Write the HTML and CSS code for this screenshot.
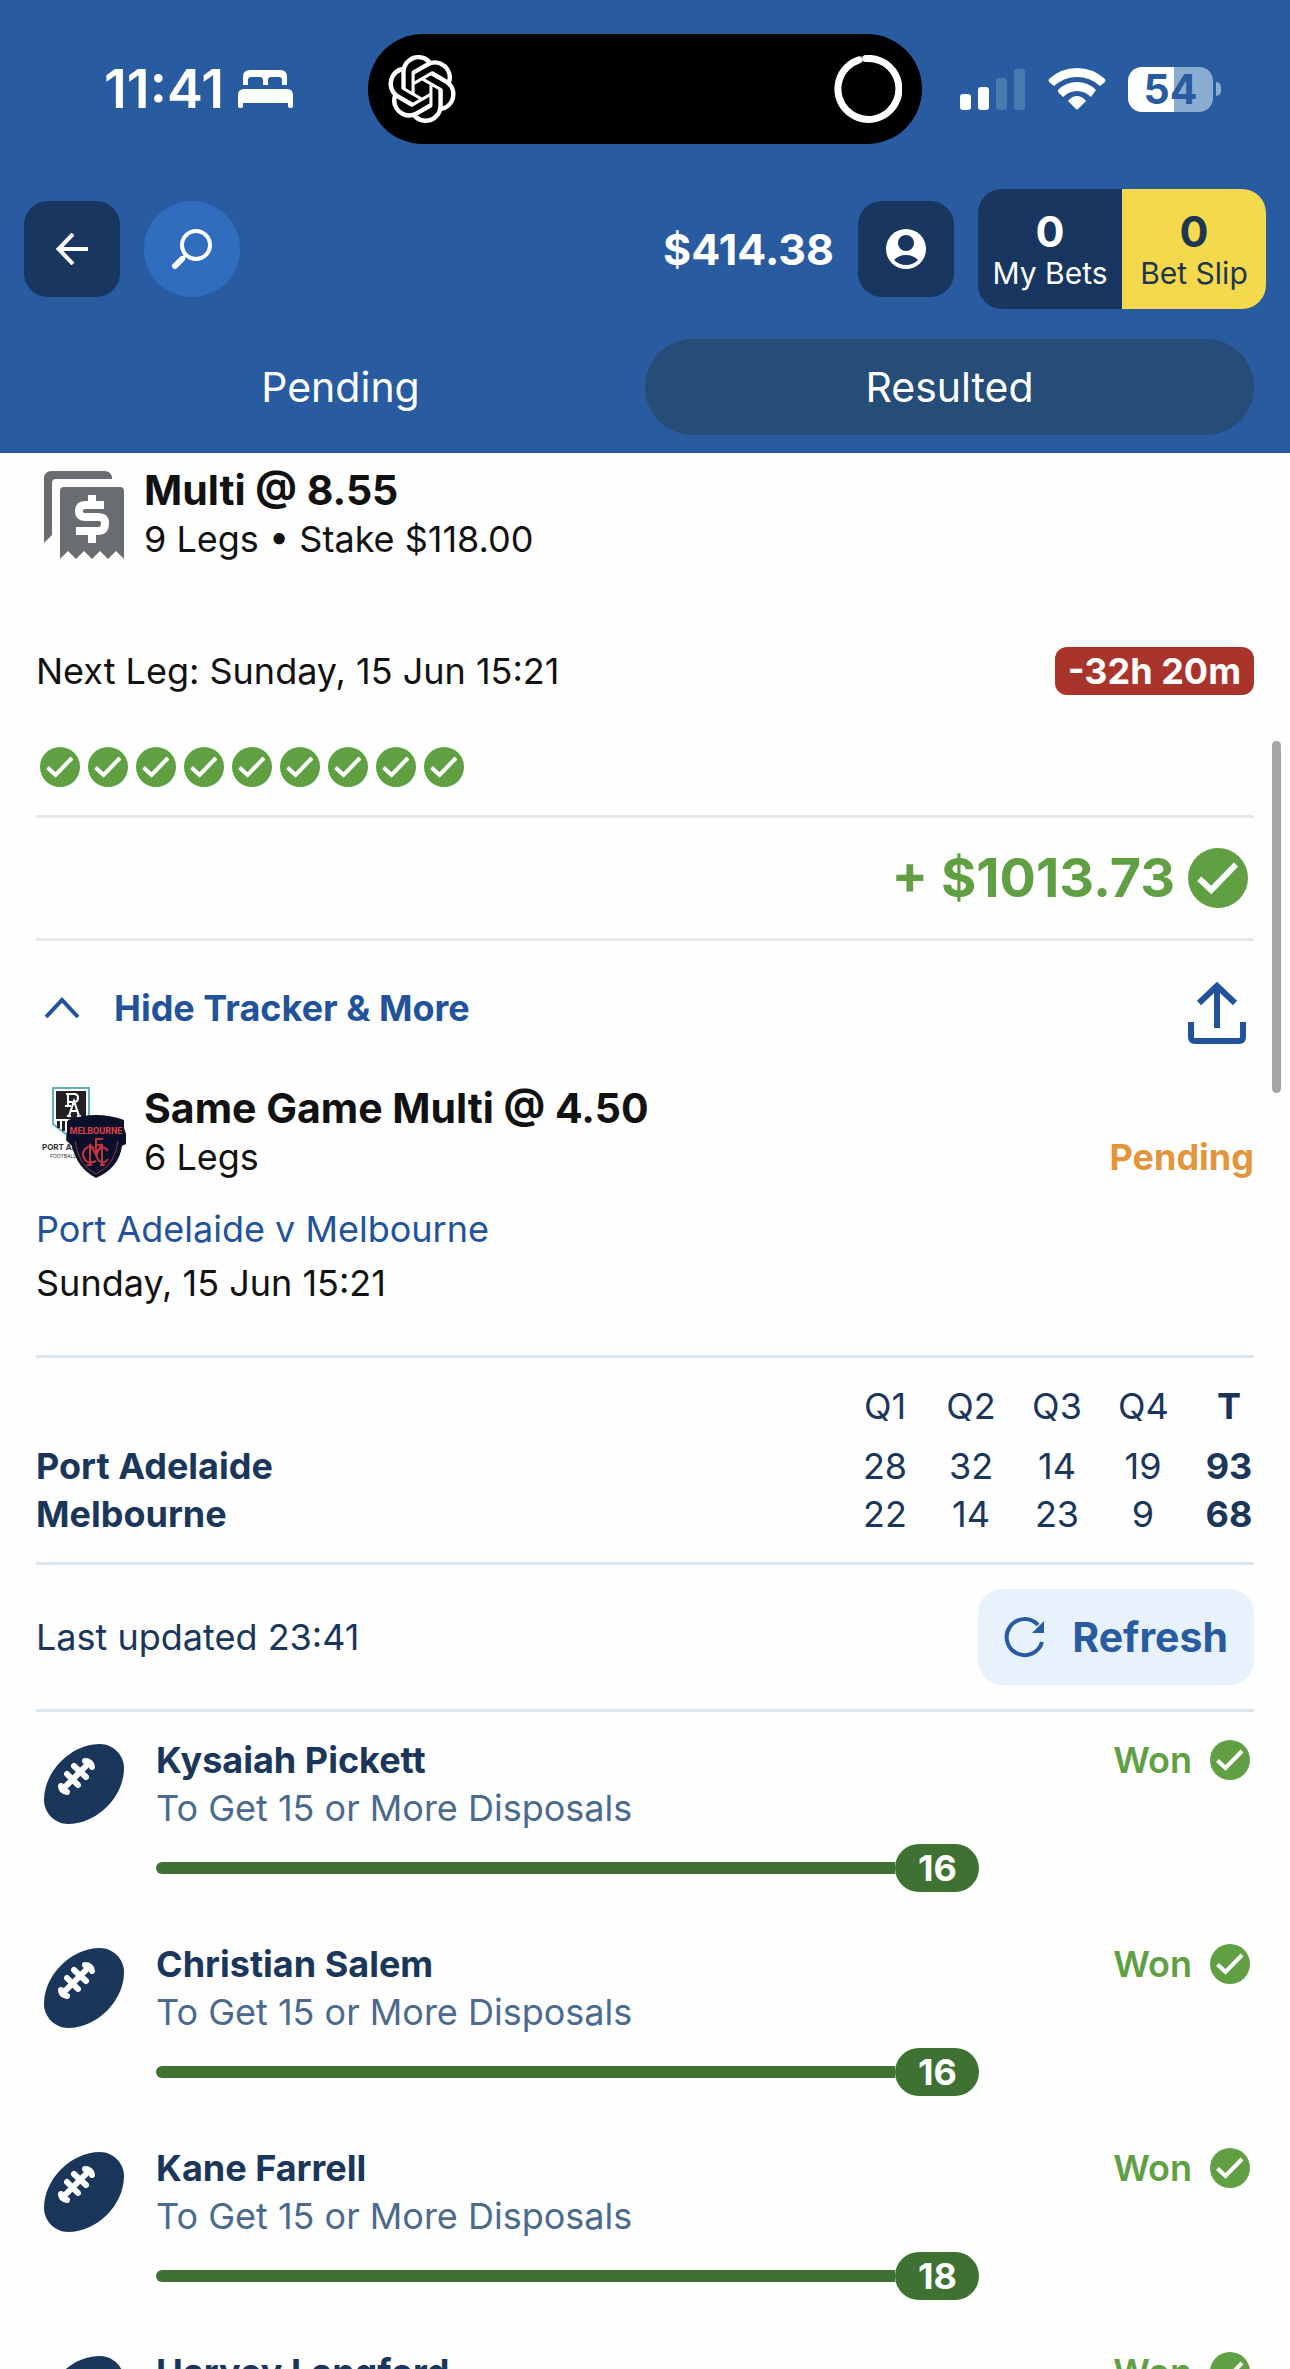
FILE: index.html
```html
<!DOCTYPE html>
<html lang="en">
<head>
  <meta charset="UTF-8">
  <meta name="viewport" content="width=device-width, initial-scale=1">
  <title>My Bets</title>
  <link rel="stylesheet" href="styles.css">
</head>

<body>

<!-- shared icons -->
<svg class="sprite" aria-hidden="true">
  <symbol id="check" viewBox="0 0 40 40">
    <circle cx="20" cy="20" r="20" fill="#60a043"/>
    <path d="M7.500 20.500L15.500 28L32 11" fill="none" stroke="#fff" stroke-width="4"/>
  </symbol>
  <symbol id="football" viewBox="0 0 80 80">
    <path d="M0 56C0 27 27 0 56 0C69 0 80 11 80 24C80 53 53 80 24 80C11 80 0 69 0 56Z" fill="#1a365a"/>
    <path d="M20 44L44 20M23 30L34 41M30 22L42 33" fill="none" stroke="#fff" stroke-width="6" stroke-linecap="round"/>
    <path d="M17 42Q17 47 23 48M41 17Q47 17 48 23" fill="none" stroke="#fff" stroke-width="6" stroke-linecap="round"/>
  </symbol>
</svg>

<header class="header">
  <div class="status-bar">
    <div class="status-left">
      <span>11:41</span>
      <svg width="56" height="38" viewBox="0 0 56 38" fill="#fff">
        <path d="M5 15V7Q5 0 12 0H42Q49 0 49 7V15H44V10Q44 7 41 7H33Q30 7 30 10V15H25V10Q25 7 22 7H13Q10 7 10 10V15Z"/>
        <path d="M0 36V25Q0 19 6 19H49Q55 19 55 25V36Q55 38 52 38Q50 38 50 36V33H5V36Q5 38 3 38Q0 38 0 36Z"/>
      </svg>
    </div>
    <div class="island">
      <svg width="68" height="68" viewBox="0 0 24 24" fill="#fff"><path d="M22.2819 9.8211a5.9847 5.9847 0 0 0-.5157-4.9108 6.0462 6.0462 0 0 0-6.5098-2.9A6.0651 6.0651 0 0 0 4.9807 4.1818a5.9847 5.9847 0 0 0-3.9977 2.9 6.0462 6.0462 0 0 0 .7427 7.0966 5.98 5.98 0 0 0 .511 4.9107 6.051 6.051 0 0 0 6.5146 2.9001A5.9847 5.9847 0 0 0 13.2599 24a6.0557 6.0557 0 0 0 5.7718-4.2058 5.9894 5.9894 0 0 0 3.9977-2.9001 6.0557 6.0557 0 0 0-.7475-7.0729zm-9.022 12.6081a4.4755 4.4755 0 0 1-2.8764-1.0408l.1419-.0804 4.7783-2.7582a.7948.7948 0 0 0 .3927-.6813v-6.7369l2.02 1.1686a.071.071 0 0 1 .038.0615v5.5826a4.504 4.504 0 0 1-4.4945 4.4944zm-9.6607-4.1254a4.4708 4.4708 0 0 1-.5346-3.0137l.142.0852 4.783 2.7582a.7712.7712 0 0 0 .7806 0l5.8428-3.3685v2.3324a.0804.0804 0 0 1-.0332.0615L9.74 19.9502a4.4992 4.4992 0 0 1-6.1408-1.6464zM2.3408 7.8956a4.485 4.485 0 0 1 2.3655-1.9728V11.6a.7664.7664 0 0 0 .3879.6765l5.8144 3.3543-2.0201 1.1685a.0757.0757 0 0 1-.071 0l-4.8303-2.7865A4.504 4.504 0 0 1 2.3408 7.8956zm16.5963 3.8558L13.1038 8.364 15.1192 7.2a.0757.0757 0 0 1 .071 0l4.8303 2.7913a4.4944 4.4944 0 0 1-.6765 8.1042v-5.6772a.79.79 0 0 0-.407-.667zm2.0107-3.0231l-.142-.0852-4.7735-2.7818a.7759.7759 0 0 0-.7854 0L9.409 9.2297V6.8974a.0662.0662 0 0 1 .0284-.0615l4.8303-2.7866a4.4992 4.4992 0 0 1 6.6802 4.66zM8.3065 12.863l-2.02-1.1638a.0804.0804 0 0 1-.038-.0567V6.0742a4.4992 4.4992 0 0 1 7.3757-3.4537l-.142.0805L8.704 5.459a.7948.7948 0 0 0-.3927.6813zm1.0976-2.3654l2.602-1.4998 2.6069 1.4998v2.9994l-2.5974 1.4997-2.6067-1.4997Z"/></svg>
      <svg width="68" height="68" viewBox="0 0 68 68" fill="none">
        <circle cx="34" cy="34" r="30.500" stroke="#555" stroke-width="6"/>
        <path d="M32 3.500A30.500 30.500 0 1 1 25 4.900" stroke="#fff" stroke-width="7" stroke-linecap="round"/>
      </svg>
    </div>
    <div class="status-right">
      <svg width="66" height="42" viewBox="0 0 66 42" fill="#fff">
        <rect x="0" y="26" width="11" height="16" rx="3"/>
        <rect x="18" y="19" width="11" height="23" rx="3"/>
        <rect x="36" y="10" width="11" height="32" rx="3" fill="#477bb0"/>
        <rect x="54" y="1" width="11" height="41" rx="3" fill="#477bb0"/>
      </svg>
      <svg width="58" height="42" viewBox="0 0 58 42" fill="#fff">
        <path d="M1 11Q13 0 29 0Q45 0 57 11Q58 12 57 14L52 18Q42 9 29 9Q16 9 6 18L1 14Q0 12 1 11Z"/>
        <path d="M10 22Q18 14 29 14Q40 14 48 22L43 29Q37 23 29 23Q21 23 15 29L10 24Z"/>
        <path d="M20 33Q24 28 29 28Q34 28 38 33L30 41Q29 42 28 41Z"/>
      </svg>
      <div class="battery"><span class="battery-level">54</span><i class="battery-cap"></i></div>
    </div>
  </div>

  <nav class="toolbar">
    <button class="tool back" type="button" aria-label="Back">
      <svg width="32" height="32" viewBox="0 0 32 32" fill="none" stroke="#fff" stroke-width="4"><path d="M32 16H3M17 1L2.500 16L17 31"/></svg>
    </button>
    <button class="tool search" type="button" aria-label="Search">
      <svg width="42" height="42" viewBox="0 0 42 42" fill="none" stroke="#fff">
        <circle cx="25" cy="17" r="14" stroke-width="4"/>
        <path d="M15 27L10 32" stroke-width="3"/>
        <path d="M11 31L4 38" stroke-width="6" stroke-linecap="round"/>
      </svg>
    </button>
    <span class="balance">$414.38</span>
    <button class="tool account" type="button" aria-label="Account">
      <svg width="40" height="40" viewBox="0 0 40 40">
        <circle cx="20" cy="20" r="20" fill="#fff"/>
        <circle cx="20" cy="14" r="8" fill="#18365f"/>
        <path d="M8 31Q13 26 20 26Q27 26 32 31Q27 36 20 36Q13 36 8 31Z" fill="#18365f"/>
      </svg>
    </button>
    <div class="bets">
      <a class="my-bets" href="#"><b>0</b>My Bets</a>
      <a class="bet-slip" href="#"><b>0</b>Bet Slip</a>
    </div>
  </nav>

  <div class="tabs">
    <button type="button">Pending</button>
    <button type="button" class="active">Resulted</button>
  </div>
</header>

<main class="content">
  <section class="bet-head">
    <svg class="head-icon" width="80" height="88" viewBox="0 0 80 88" fill="#696c71">
      <path d="M0 72V8Q0 0 8 0H60Q68 0 68 8H12Q8 8 8 12V64Z"/>
      <path d="M16 20Q16 16 20 16H76Q80 16 80 20V88L72 80L64 88L56 80L48 88L40 80L32 88L24 80L16 88Z"/>
      <path d="M60 34H42Q35 34 35 40Q35 46 42 46H54Q61 46 61 52Q61 60 54 60H32M48 24V34M48 60V72" fill="none" stroke="#fff" stroke-width="8"/>
    </svg>
    <div>
      <h2>Multi @ 8.55</h2>
      <p>9 Legs • Stake $118.00</p>
    </div>
  </section>

  <div class="next-leg">
    <span>Next Leg: Sunday, 15 Jun 15:21</span>
    <span class="countdown">-32h 20m</span>
  </div>

  <div class="leg-checks">
    <svg><use href="#check"/></svg>
    <svg><use href="#check"/></svg>
    <svg><use href="#check"/></svg>
    <svg><use href="#check"/></svg>
    <svg><use href="#check"/></svg>
    <svg><use href="#check"/></svg>
    <svg><use href="#check"/></svg>
    <svg><use href="#check"/></svg>
    <svg><use href="#check"/></svg>
  </div>

  <div class="payout">
    <span>+ $1013.73</span>
    <svg><use href="#check"/></svg>
  </div>

  <div class="tracker-bar">
    <button type="button" class="tracker-toggle">
      <svg width="36" height="24" viewBox="0 0 36 24" fill="none" stroke="#22539a" stroke-width="4"><path d="M2 21L18 4L34 21"/></svg>
      Hide Tracker &amp; More
    </button>
    <button type="button" class="share" aria-label="Share">
      <svg width="58" height="64" viewBox="0 0 58 64" fill="none" stroke="#22539a" stroke-width="6">
        <path d="M29 47V5M11 22L29 5L47 22"/>
        <path d="M3 41V56Q3 60 7 60H51Q55 60 55 56V41"/>
      </svg>
    </button>
  </div>

  <section class="bet-head game-head">
    <svg class="head-icon" width="86" height="92" viewBox="0 0 86 92">
      <path d="M11 2H47V40L29 52L11 38Z" fill="#fff" stroke="#63b0bd" stroke-width="2"/>
      <path d="M14 5H44V33H14Z" fill="#222"/>
      <path d="M15 35H18V42H15ZM20 35H23V45H20ZM25 35H28V48H25Z" fill="#222"/>
      <!-- interlocked club monogram -->
      <path d="M24 8H32Q36 8 36 12Q36 16 32 16H27M26 8V20M23 20H29M27 30L32 15L37 30M29 25H35M25 30H29M35 30H39" fill="none" stroke="#fff" stroke-width="2"/>
      <g font-family="Inter, sans-serif" fill="#333">
        <text x="0" y="64" font-size="8" font-weight="bold">PORT AD</text>
        <text x="8" y="72" font-size="5">FOOTBALL</text>
      </g>
      <path d="M26 34Q54 24 82 34V42L84 48V58L80 60Q77 82 54 92Q35 82 30 60L24 54Z" fill="#0a1029"/>
      <path d="M33 55Q36 79 54 88Q73 79 76 55" fill="none" stroke="#9a3342" stroke-width="1"/>
      <text x="54" y="48" font-family="Roboto, sans-serif" font-size="9" font-weight="bold" fill="#e0404a" text-anchor="middle">MELBOURNE</text>
      <g fill="none" stroke="#c13440" stroke-width="2">
        <path d="M48 79V58L54 69L60 58V79M45 79H50M58 79H63M54 68V53H61M54 59H59"/>
        <path d="M52 62Q48 59 44 62Q38 68 44 75Q48 78 54 75M66 65Q62 59 57 63Q52 69 57 75Q62 79 66 73"/>
      </g>
    </svg>
    <div>
      <h2>Same Game Multi @ 4.50</h2>
      <p>6 Legs <strong class="pending">Pending</strong></p>
    </div>
  </section>

  <div class="match">
    <a href="#">Port Adelaide v Melbourne</a>
    <p>Sunday, 15 Jun 15:21</p>
  </div>

  <table class="scores">
    <thead>
      <tr><td></td><th>Q1</th><th>Q2</th><th>Q3</th><th>Q4</th><th class="total">T</th></tr>
    </thead>
    <tbody>
      <tr><th scope="row">Port Adelaide</th><td>28</td><td>32</td><td>14</td><td>19</td><td class="total">93</td></tr>
      <tr><th scope="row">Melbourne</th><td>22</td><td>14</td><td>23</td><td>9</td><td class="total">68</td></tr>
    </tbody>
  </table>

  <div class="updated">
    <span>Last updated 23:41</span>
    <button type="button">
      <svg width="42" height="42" viewBox="0 0 42 42">
        <path d="M34 9A18 18 0 1 0 38 26" fill="none" stroke="#285b9f" stroke-width="4"/>
        <path d="M40 5V17H28Z" fill="#285b9f"/>
      </svg>
      Refresh
    </button>
  </div>

  <ul class="legs">
    <li class="leg">
      <svg class="ball"><use href="#football"/></svg>
      <div class="leg-info">
        <h3>Kysaiah Pickett</h3>
        <p>To Get 15 or More Disposals</p>
        <div class="progress"><i></i><b>16</b></div>
      </div>
      <div class="result">Won <svg><use href="#check"/></svg></div>
    </li>
    <li class="leg">
      <svg class="ball"><use href="#football"/></svg>
      <div class="leg-info">
        <h3>Christian Salem</h3>
        <p>To Get 15 or More Disposals</p>
        <div class="progress"><i></i><b>16</b></div>
      </div>
      <div class="result">Won <svg><use href="#check"/></svg></div>
    </li>
    <li class="leg">
      <svg class="ball"><use href="#football"/></svg>
      <div class="leg-info">
        <h3>Kane Farrell</h3>
        <p>To Get 15 or More Disposals</p>
        <div class="progress"><i></i><b>18</b></div>
      </div>
      <div class="result">Won <svg><use href="#check"/></svg></div>
    </li>
    <li class="leg">
      <svg class="ball"><use href="#football"/></svg>
      <div class="leg-info">
        <h3>Harvey Langford</h3>
      </div>
      <div class="result">Won <svg><use href="#check"/></svg></div>
    </li>
  </ul>
</main>

<div class="scroll-thumb"></div>

</body>
</html>
```
FILE: styles.css
```css
* {
  box-sizing: border-box;
}
html, body {
  margin: 0;
  height: 100%;
  overflow: hidden;
}
body {
  position: relative;
  background: #fefefe;
  color: #111;
  font-family: Inter, "Liberation Sans", sans-serif;
  font-size: 36px;
  line-height: 48px;
}
h2, h3, p, ul {
  margin: 0;
  padding: 0;
}
svg {
  display: block;
  flex: none;
}
button {
  border: 0;
  padding: 0;
  background: none;
  color: inherit;
  font: inherit;
}
a {
  color: inherit;
  text-decoration: none;
}
.sprite {
  position: absolute;
  width: 0;
  height: 0;
}

/* header */
.header {
  background: #285b9f;
  color: #fff;
  padding-bottom: 18px;
}
.status-bar {
  display: grid;
  grid-template-columns: 1fr 554px 1fr;
  align-items: center;
  padding-top: 34px;
}
.status-left {
  display: flex;
  align-items: center;
  justify-content: flex-end;
  gap: 14px;
  padding-right: 74px;
  font-size: 54px;
  font-weight: 600;
}
.island {
  display: flex;
  align-items: center;
  justify-content: space-between;
  height: 110px;
  padding: 0 20px;
  border-radius: 55px;
  background: #000;
}
.status-right {
  display: flex;
  align-items: center;
  gap: 22px;
  padding-left: 38px;
}
.battery {
  display: flex;
  align-items: center;
  gap: 3px;
}
.battery-level {
  width: 85px;
  height: 45px;
  border-radius: 14px;
  background: linear-gradient(to right, #fff 54%, #8badd1 54%);
  color: #285b9f;
  font-size: 41px;
  font-weight: 700;
  line-height: 45px;
  text-align: center;
}
.battery-cap {
  width: 5px;
  height: 14px;
  border-radius: 0 5px 5px 0;
  background: #8badd1;
}
.toolbar {
  display: flex;
  align-items: center;
  gap: 24px;
  padding: 45px 24px 30px;
}
.tool {
  display: flex;
  align-items: center;
  justify-content: center;
  width: 96px;
  height: 96px;
  border-radius: 24px;
  background: #18365f;
}
.search {
  border-radius: 50%;
  background: #306dbf;
}
.balance {
  margin-left: auto;
  font-size: 43px;
  font-weight: 700;
}
.bets {
  display: flex;
  height: 120px;
  border-radius: 24px;
  overflow: hidden;
}
.bets a {
  display: flex;
  flex-direction: column;
  justify-content: center;
  width: 144px;
  background: #18365f;
  font-size: 30px;
  line-height: 36px;
  text-align: center;
}
.bets b {
  font-size: 43px;
  font-weight: 700;
  line-height: 48px;
}
.bets .bet-slip {
  background: #f3d94b;
  color: #1e3650;
}
.tabs {
  display: flex;
  padding: 0 36px;
}
.tabs button {
  flex: 1;
  height: 96px;
  border-radius: 48px;
  font-size: 41px;
}
.tabs .active {
  background: #264c78;
}

/* bet summary */
.content {
  padding: 13px 36px 0;
}
.bet-head {
  display: flex;
  gap: 20px;
}
.bet-head > div {
  flex: 1;
}
.bet-head h2 {
  font-size: 41px;
  font-weight: 700;
  line-height: 49px;
}
.bet-head p {
  display: flex;
  justify-content: space-between;
}
.head-icon {
  margin: 5px 0 0 8px;
}
.next-leg {
  display: flex;
  align-items: center;
  justify-content: space-between;
  margin-top: 84px;
}
.countdown {
  padding: 0 13px;
  border-radius: 12px;
  background: #a8342b;
  color: #fff;
  font-weight: 700;
}
.leg-checks {
  display: flex;
  gap: 8px;
  padding: 52px 4px 28px;
  border-bottom: 3px solid #e4e8ec;
}
.leg-checks svg,
.result svg {
  width: 40px;
  height: 40px;
}
.payout {
  display: flex;
  align-items: center;
  justify-content: flex-end;
  gap: 13px;
  height: 123px;
  padding-right: 6px;
  border-bottom: 3px solid #e4e8ec;
  color: #60a043;
  font-size: 54px;
  font-weight: 700;
}
.payout svg {
  width: 60px;
  height: 60px;
}
.tracker-bar {
  display: flex;
  align-items: center;
  justify-content: space-between;
  height: 143px;
  padding: 0 8px;
  color: #22539a;
  font-weight: 700;
}
.tracker-toggle {
  display: flex;
  align-items: center;
  gap: 34px;
  padding-bottom: 10px;
}
.game-head {
  gap: 16px;
}
.game-head .head-icon {
  margin: 2px 0 0 6px;
}
.pending {
  color: #e2953b;
  font-weight: 700;
}
.match {
  padding: 21px 0 45px;
  line-height: 54px;
}
.match a {
  color: #22539a;
}

/* scoreboard */
.scores {
  width: 100%;
  padding: 24px 0;
  border-top: 3px solid #dde5ed;
  border-bottom: 3px solid #dde5ed;
  border-spacing: 0;
  table-layout: fixed;
  color: #1a365a;
}
.scores td,
.scores th {
  width: 86px;
  padding: 0 0 0 36px;
  font-weight: 400;
  text-align: center;
}
.scores thead th {
  padding-bottom: 12px;
}
.scores tr > :first-child {
  width: auto;
  padding-left: 0;
  font-weight: 700;
  text-align: left;
}
.scores .total {
  font-weight: 700;
}
.updated {
  display: flex;
  align-items: center;
  justify-content: space-between;
  height: 147px;
  border-bottom: 3px solid #dde5ed;
  color: #1a365a;
}
.updated button {
  display: flex;
  align-items: center;
  gap: 26px;
  height: 96px;
  padding: 0 26px;
  border-radius: 24px;
  background: #e8f2fd;
  color: #285b9f;
  font-size: 41px;
  font-weight: 700;
}

/* legs */
.legs {
  padding: 24px 4px 0 8px;
  list-style: none;
}
.leg {
  display: flex;
  gap: 32px;
  margin-bottom: 48px;
}
.ball {
  width: 80px;
  height: 80px;
  margin-top: 8px;
}
.leg-info {
  flex: 1;
  color: #4b6a8d;
}
.leg-info h3 {
  color: #1a365a;
  font-size: 36px;
  font-weight: 700;
}
.progress {
  display: flex;
  align-items: center;
  width: 89%;
  margin-top: 12px;
}
.progress i {
  flex: 1;
  height: 12px;
  border-radius: 6px 0 0 6px;
  background: #3e7132;
}
.progress b {
  width: 84px;
  border-radius: 24px;
  background: #3e7132;
  color: #fff;
  font-weight: 700;
  text-align: center;
}
.result {
  display: flex;
  align-items: center;
  gap: 18px;
  height: 48px;
  color: #60a043;
  font-weight: 600;
}

/* scroll position marker, floats over the page */
.scroll-thumb {
  position: absolute;
  top: 741px;
  right: 9px;
  width: 9px;
  height: 352px;
  border-radius: 5px;
  background: #a5a5a5;
}
```
